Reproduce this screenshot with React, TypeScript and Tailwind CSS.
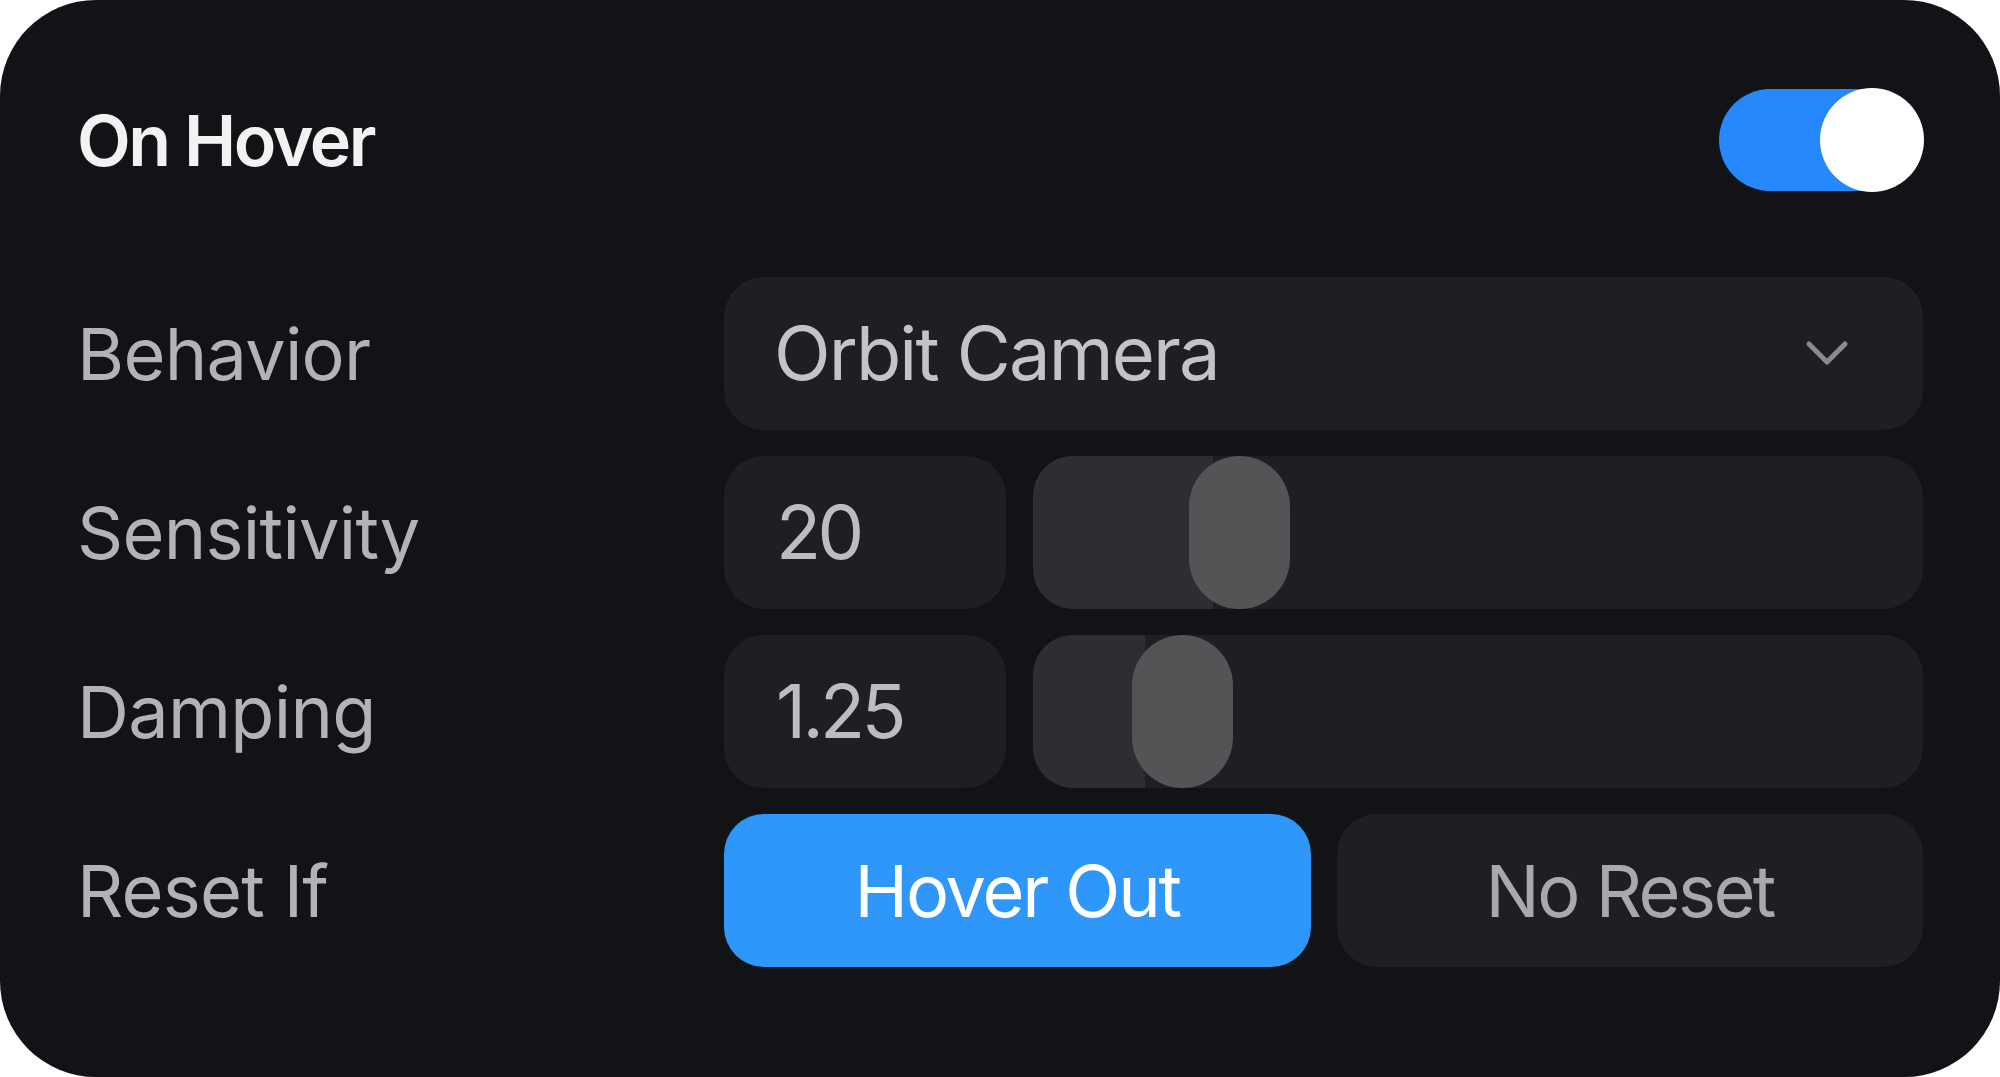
const font = { fontFamily: 'Inter, "Noto Sans", sans-serif' };

function Label({ children }: { children: string }) {
  return (
    <div className="flex items-center text-[72px] text-[#b3b3b5] tracking-[-0.01em]">{children}</div>
  );
}

function Chevron() {
  return (
    <svg width="44" height="28" viewBox="0 0 44 28" fill="none" className="text-[#8b8b8d]">
      <path d="M4 4 L22 22 L40 4" stroke="currentColor" strokeWidth="5" strokeLinecap="round" strokeLinejoin="round" />
    </svg>
  );
}

function NumberSlider({ value, fill, thumb }: { value: string; fill: number; thumb: number }) {
  return (
    <div className="flex gap-[27px] h-[153px]">
      <div className="w-[282px] shrink-0 rounded-[40px] bg-[#1e1f23] flex items-center pl-[52px] text-[74px] text-[#bdbdbf] tracking-[-0.05em]">
        {value}
      </div>
      <div className="relative flex-1 rounded-[40px] bg-[#1e1f23] overflow-hidden">
        <div className="h-full bg-[#2d2e32]" style={{ width: fill }} />
        <div
          className="absolute top-0 h-full w-[101px] rounded-full bg-[#545456]"
          style={{ left: thumb }}
        />
      </div>
    </div>
  );
}

export default function App() {
  return (
    <div className="w-full h-[1077px] bg-white" style={font}>
      <div className="h-full w-full rounded-[96px] bg-[#121317] pl-[77px] pr-[77px] pt-[89px]">
        <div className="flex items-center justify-between h-[102px]">
          <span className="text-[70px] font-semibold text-[#f2f2f3] tracking-[-0.035em]">On Hover</span>
          <button className="relative w-[204px] h-[102px] rounded-full bg-[#2688fc]">
            <span className="absolute -right-px -top-px w-[104px] h-[104px] rounded-full bg-white" />
          </button>
        </div>

        <div className="mt-[86px] grid grid-cols-[647px_1fr] gap-y-[26px]">
          <Label>Behavior</Label>
          <div className="h-[153px] rounded-[40px] bg-[#1e1f23] flex items-center justify-between pl-[50px] pr-[74px] text-[74px] text-[#c4c4c6] tracking-[-0.025em]">
            <span>Orbit Camera</span>
            <Chevron />
          </div>

          <Label>Sensitivity</Label>
          <NumberSlider value="20" fill={180} thumb={156} />

          <Label>Damping</Label>
          <NumberSlider value="1.25" fill={112} thumb={99} />

          <Label>Reset If</Label>
          <div className="grid grid-cols-2 gap-[26px] h-[153px]">
            <button className="rounded-[40px] bg-[#2e97f9] text-white text-[72px] tracking-[-0.03em]">
              Hover Out
            </button>
            <button className="rounded-[40px] bg-[#1e1f23] text-[#a9a9ab] text-[72px] tracking-[-0.035em]">
              No Reset
            </button>
          </div>
        </div>
      </div>
    </div>
  );
}
